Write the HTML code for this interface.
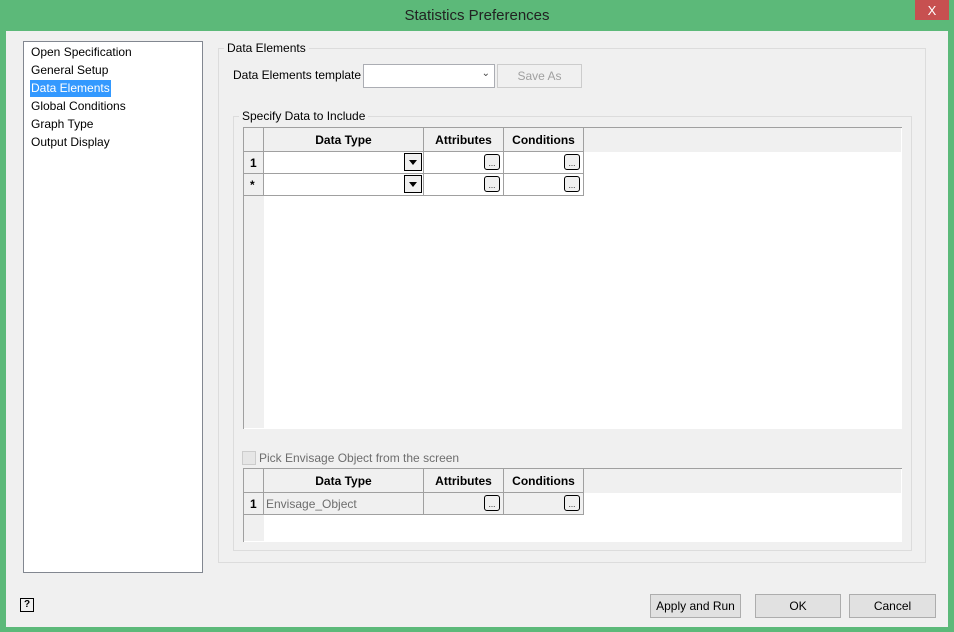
<!DOCTYPE html><html><head><style>
body{margin:0;width:954px;height:632px;background:#5cb979;font-family:"Liberation Sans",sans-serif;font-size:12px;color:#000;position:relative;overflow:hidden}
.a{position:absolute}
.win{left:6px;top:31px;width:942px;height:596px;background:#f0f0f0}
.title{left:0;top:0;width:954px;height:31px;line-height:31px;text-align:center;font-size:15px;color:#222}
.x{left:915px;top:0;width:34px;height:20px;background:#c75050;color:#fff;text-align:center;line-height:22px;font-size:13px}
.list{left:23px;top:41px;width:178px;height:530px;background:#fff;border:1px solid #828790}
.list div{position:absolute;left:6px;height:17px;line-height:17px;padding:0 1px}
.gb{border:1px solid #dcdcdc}
.btn{background:#e1e1e1;border:1px solid #adadad;text-align:center;line-height:22px;height:22px;position:absolute}
.c{position:absolute;border-right:1px solid #a0a0a0;border-bottom:1px solid #a0a0a0;box-sizing:border-box}
.h{background:#f0f0f0;font-weight:bold;text-align:center;line-height:24px}
.d{width:16px;height:16px;border:1px solid #000;border-radius:3px;background:#f0f0f0;position:absolute;font-size:8px;text-align:center;line-height:18px;box-sizing:border-box}
.dd{width:18px;height:18px;border:1px solid #000;background:#f0f0f0;position:absolute;box-sizing:border-box}
.dd:after{content:"";position:absolute;left:4px;top:6px;border-left:4px solid transparent;border-right:4px solid transparent;border-top:5px solid #000}
</style></head><body>
<div class="a title">Statistics Preferences</div>
<div class="a x">X</div>
<div class="a win"></div>
<div class="a list">
<div style="top:2px">Open Specification</div>
<div style="top:20px">General Setup</div>
<div style="top:38px;background:#3399ff;color:#fff">Data Elements</div>
<div style="top:56px">Global Conditions</div>
<div style="top:74px">Graph Type</div>
<div style="top:92px">Output Display</div>
</div>
<div class="a gb" style="left:218px;top:48px;width:706px;height:513px"></div>
<div class="a" style="left:224px;top:41px;background:#f0f0f0;padding:0 3px">Data Elements</div>
<div class="a" style="left:233px;top:68px">Data Elements template</div>
<div class="a" style="left:363px;top:64px;width:130px;height:22px;background:#fff;border:1px solid #abadb3"><span style="position:absolute;right:4px;top:3px;font-size:10px;color:#444">&#8964;</span></div>
<div class="btn" style="left:497px;top:64px;width:83px;color:#a0a0a0;background:#f0f0f0;border-color:#ccc">Save As</div>
<div class="a gb" style="left:233px;top:116px;width:677px;height:433px"></div>
<div class="a" style="left:239px;top:109px;background:#f0f0f0;padding:0 3px">Specify Data to Include</div>
<div class="a" style="left:243px;top:127px;width:658px;height:301px;background:#fff;border-left:1px solid #a0a0a0;border-top:1px solid #a0a0a0"></div>
<div class="a" style="left:244px;top:128px;width:657px;height:24px;background:#f0f0f0"></div>
<div class="a" style="left:244px;top:128px;width:20px;height:300px;background:#f0f0f0"></div>
<div class="c h" style="left:244px;top:128px;width:20px;height:24px"></div>
<div class="c h" style="left:264px;top:128px;width:160px;height:24px">Data Type</div>
<div class="c h" style="left:424px;top:128px;width:80px;height:24px">Attributes</div>
<div class="c h" style="left:504px;top:128px;width:80px;height:24px">Conditions</div>
<div class="c" style="left:244px;top:152px;width:20px;height:22px;font-weight:bold;line-height:22px;padding-left:6px">1</div>
<div class="c" style="left:264px;top:152px;width:160px;height:22px"><div class="dd" style="left:140px;top:1px"></div></div>
<div class="c" style="left:424px;top:152px;width:80px;height:22px"><div class="d" style="left:60px;top:2px">...</div></div>
<div class="c" style="left:504px;top:152px;width:80px;height:22px"><div class="d" style="left:60px;top:2px">...</div></div>
<div class="c" style="left:244px;top:174px;width:20px;height:22px;font-weight:bold;line-height:22px;padding-left:6px">*</div>
<div class="c" style="left:264px;top:174px;width:160px;height:22px"><div class="dd" style="left:140px;top:1px"></div></div>
<div class="c" style="left:424px;top:174px;width:80px;height:22px"><div class="d" style="left:60px;top:2px">...</div></div>
<div class="c" style="left:504px;top:174px;width:80px;height:22px"><div class="d" style="left:60px;top:2px">...</div></div>
<div class="a" style="left:242px;top:451px;width:12px;height:12px;border:1px solid #ccc;background:#e6e6e6"></div>
<div class="a" style="left:259px;top:451px;color:#6d6d6d">Pick Envisage Object from the screen</div>
<div class="a" style="left:243px;top:468px;width:658px;height:73px;background:#fff;border-left:1px solid #a0a0a0;border-top:1px solid #a0a0a0"></div>
<div class="a" style="left:244px;top:469px;width:657px;height:24px;background:#f0f0f0"></div>
<div class="a" style="left:244px;top:469px;width:20px;height:72px;background:#f0f0f0"></div>
<div class="c h" style="left:244px;top:469px;width:20px;height:24px"></div>
<div class="c h" style="left:264px;top:469px;width:160px;height:24px">Data Type</div>
<div class="c h" style="left:424px;top:469px;width:80px;height:24px">Attributes</div>
<div class="c h" style="left:504px;top:469px;width:80px;height:24px">Conditions</div>
<div class="c" style="left:244px;top:493px;width:20px;height:22px;font-weight:bold;line-height:22px;padding-left:6px">1</div>
<div class="c" style="left:264px;top:493px;width:160px;height:22px;background:#f0f0f0;color:#6d6d6d;line-height:22px;padding-left:2px">Envisage_Object</div>
<div class="c" style="left:424px;top:493px;width:80px;height:22px;background:#f0f0f0"><div class="d" style="left:60px;top:2px">...</div></div>
<div class="c" style="left:504px;top:493px;width:80px;height:22px;background:#f0f0f0"><div class="d" style="left:60px;top:2px">...</div></div>
<div class="a" style="left:20px;top:598px;width:12px;height:12px;border:1px solid #000;font-size:10px;font-weight:bold;text-align:center;line-height:12px">?</div>
<div class="btn" style="left:650px;top:594px;width:89px">Apply and Run</div>
<div class="btn" style="left:755px;top:594px;width:84px">OK</div>
<div class="btn" style="left:849px;top:594px;width:85px">Cancel</div>
</body></html>
